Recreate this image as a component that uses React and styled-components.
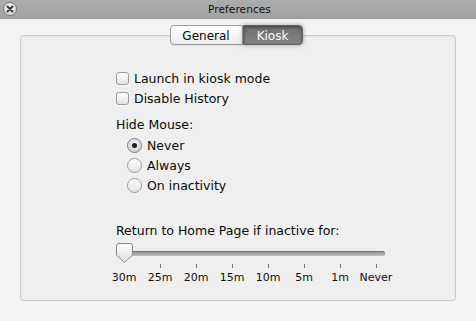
import React from 'react';
import styled, { createGlobalStyle } from 'styled-components';

const GlobalStyle = createGlobalStyle`
  html, body {
    margin: 0;
    padding: 0;
    background: #f4f4f4;
  }
  body {
    font-family: "DejaVu Sans", "Liberation Sans", sans-serif;
    color: #0a0a0a;
  }
`;

const Window = styled.div`
  width: 476px;
  height: 321px;
  display: flex;
  flex-direction: column;
  overflow: hidden;
  background: #f4f4f4;
`;

const TitleBar = styled.div`
  height: 19px;
  flex: none;
  display: grid;
  grid-template-columns: 1fr auto 1fr;
  align-items: center;
  background: linear-gradient(#acacac, #a2a2a2);
  border-bottom: 1px solid #989898;
  box-sizing: border-box;
  padding-left: 3px;
`;

const Title = styled.div`
  font-size: 10.5px;
  color: #111;
  letter-spacing: 0.1px;
`;

const CloseButton = styled.div`
  width: 14px;
  height: 14px;
  border-radius: 50%;
  box-sizing: border-box;
  border: 1px solid #777;
  background: radial-gradient(circle at 50% 35%, #f4f4f4, #cdcdcd);
  display: flex;
  align-items: center;
  justify-content: center;
`;

const Tabs = styled.div`
  display: flex;
  justify-content: center;
  margin: 6px 0 -10px -4px;
  position: relative;
  z-index: 1;
`;

const Segment = styled.div`
  height: 20px;
  width: ${(p) => p.$w}px;
  box-sizing: border-box;
  display: flex;
  align-items: center;
  justify-content: center;
  font-size: 12px;
  border: 1px solid ${(p) => (p.$active ? '#626262' : '#9a9a9a')};
  border-radius: ${(p) => (p.$first ? '4px 0 0 4px' : '0 4px 4px 0')};
  color: ${(p) => (p.$active ? '#fafafa' : '#0a0a0a')};
  background: ${(p) =>
    p.$active
      ? 'linear-gradient(#6e6e6e, #858585)'
      : 'linear-gradient(#ffffff, #ebebeb)'};
  box-shadow: ${(p) =>
    p.$active
      ? 'inset 0 1px 3px rgba(0,0,0,0.45), 0 0 4px rgba(90,90,90,0.55)'
      : '0 1px 1px rgba(0,0,0,0.08)'};
  padding-top: 1px;
`;

const Panel = styled.div`
  margin: 0 20px 0 20px;
  height: 266px;
  box-sizing: border-box;
  border: 1px solid #cdcdcd;
  border-radius: 3px;
  background: #efefef;
  box-shadow: inset 0 1px 2px rgba(0,0,0,0.06);
  padding: 32px 0 0 95px;
  display: flex;
  flex-direction: column;
`;

const Row = styled.label`
  height: 20px;
  display: flex;
  align-items: center;
  gap: 5px;
  font-size: 12.5px;
  padding-left: ${(p) => (p.$indent ? '11px' : '0')};
  margin-top: ${(p) => p.$mt || 0}px;
`;

const Label = styled.div`
  height: 20px;
  display: flex;
  align-items: center;
  font-size: 12.5px;
  margin-top: ${(p) => p.$mt || 0}px;
`;

const CheckBox = styled.span`
  width: 13px;
  height: 13px;
  flex: none;
  box-sizing: border-box;
  border: 1px solid #9b9b9b;
  border-radius: 3px;
  background: linear-gradient(#ffffff, #e4e4e4);
  box-shadow: 0 1px 0 rgba(255,255,255,0.8);
`;

const Radio = styled.span`
  width: 15px;
  height: 15px;
  flex: none;
  box-sizing: border-box;
  border: 1px solid ${(p) => (p.$on ? '#7d7d7d' : '#9b9b9b')};
  border-radius: 50%;
  background: ${(p) =>
    p.$on
      ? 'radial-gradient(circle at 50% 40%, #f4f4f4, #c9c9c9)'
      : 'linear-gradient(#ffffff, #e2e2e2)'};
  display: flex;
  align-items: center;
  justify-content: center;

  &::after {
    content: '';
    width: 5px;
    height: 5px;
    border-radius: 50%;
    background: #1e1e1e;
    display: ${(p) => (p.$on ? 'block' : 'none')};
  }
`;

const Slider = styled.div`
  position: relative;
  width: 269px;
  height: 22px;
  margin-top: 2px;
  display: flex;
  align-items: center;
`;

const Track = styled.div`
  width: 100%;
  height: 5px;
  border-radius: 3px;
  background: linear-gradient(#8f8f8f, #bdbdbd);
  box-shadow: inset 0 1px 1px rgba(0,0,0,0.25);
`;

const Knob = styled.svg`
  position: absolute;
  left: 0;
  top: 1px;
`;

const Scale = styled.div`
  display: flex;
  margin-left: -10px;
`;

const Tick = styled.div`
  width: 36px;
  display: flex;
  flex-direction: column;
  align-items: center;
  font-size: 11px;
  color: #111;

  &::before {
    content: '';
    width: 1px;
    height: 4px;
    background: #777;
    margin-bottom: 3px;
    visibility: ${(p) => (p.$hide ? 'hidden' : 'visible')};
  }
`;

const steps = ['30m', '25m', '20m', '15m', '10m', '5m', '1m', 'Never'];

export default function App() {
  return (
    <Window>
      <GlobalStyle />
      <TitleBar>
        <CloseButton>
          <svg width="8" height="8" viewBox="0 0 8 8">
            <path d="M1.5 1.5 L6.5 6.5 M6.5 1.5 L1.5 6.5" stroke="#3a3a3a" strokeWidth="1.9" strokeLinecap="round" />
          </svg>
        </CloseButton>
        <Title>Preferences</Title>
        <span />
      </TitleBar>

      <Tabs>
        <Segment $first $w={73}>General</Segment>
        <Segment $active $w={60}>Kiosk</Segment>
      </Tabs>

      <Panel>
        <Row><CheckBox />Launch in kiosk mode</Row>
        <Row><CheckBox />Disable History</Row>
        <Label $mt={6}>Hide Mouse:</Label>
        <Row $indent $mt={1}><Radio $on />Never</Row>
        <Row $indent><Radio />Always</Row>
        <Row $indent><Radio />On inactivity</Row>
        <Label $mt={25}>Return to Home Page if inactive for:</Label>
        <Slider>
          <Track />
          <Knob width="17" height="20" viewBox="0 0 17 20">
            <defs>
              <linearGradient id="kg" x1="0" y1="0" x2="0" y2="1">
                <stop offset="0" stopColor="#ffffff" />
                <stop offset="1" stopColor="#dcdcdc" />
              </linearGradient>
            </defs>
            <path
              d="M3 0.5 H14 Q16.5 0.5 16.5 3 V12 L8.5 19.5 L0.5 12 V3 Q0.5 0.5 3 0.5 Z"
              fill="url(#kg)"
              stroke="#8a8a8a"
              strokeWidth="1"
            />
          </Knob>
        </Slider>
        <Scale>
          {steps.map((s, i) => (
            <Tick key={s} $hide={i === 0}>{s}</Tick>
          ))}
        </Scale>
      </Panel>
    </Window>
  );
}
